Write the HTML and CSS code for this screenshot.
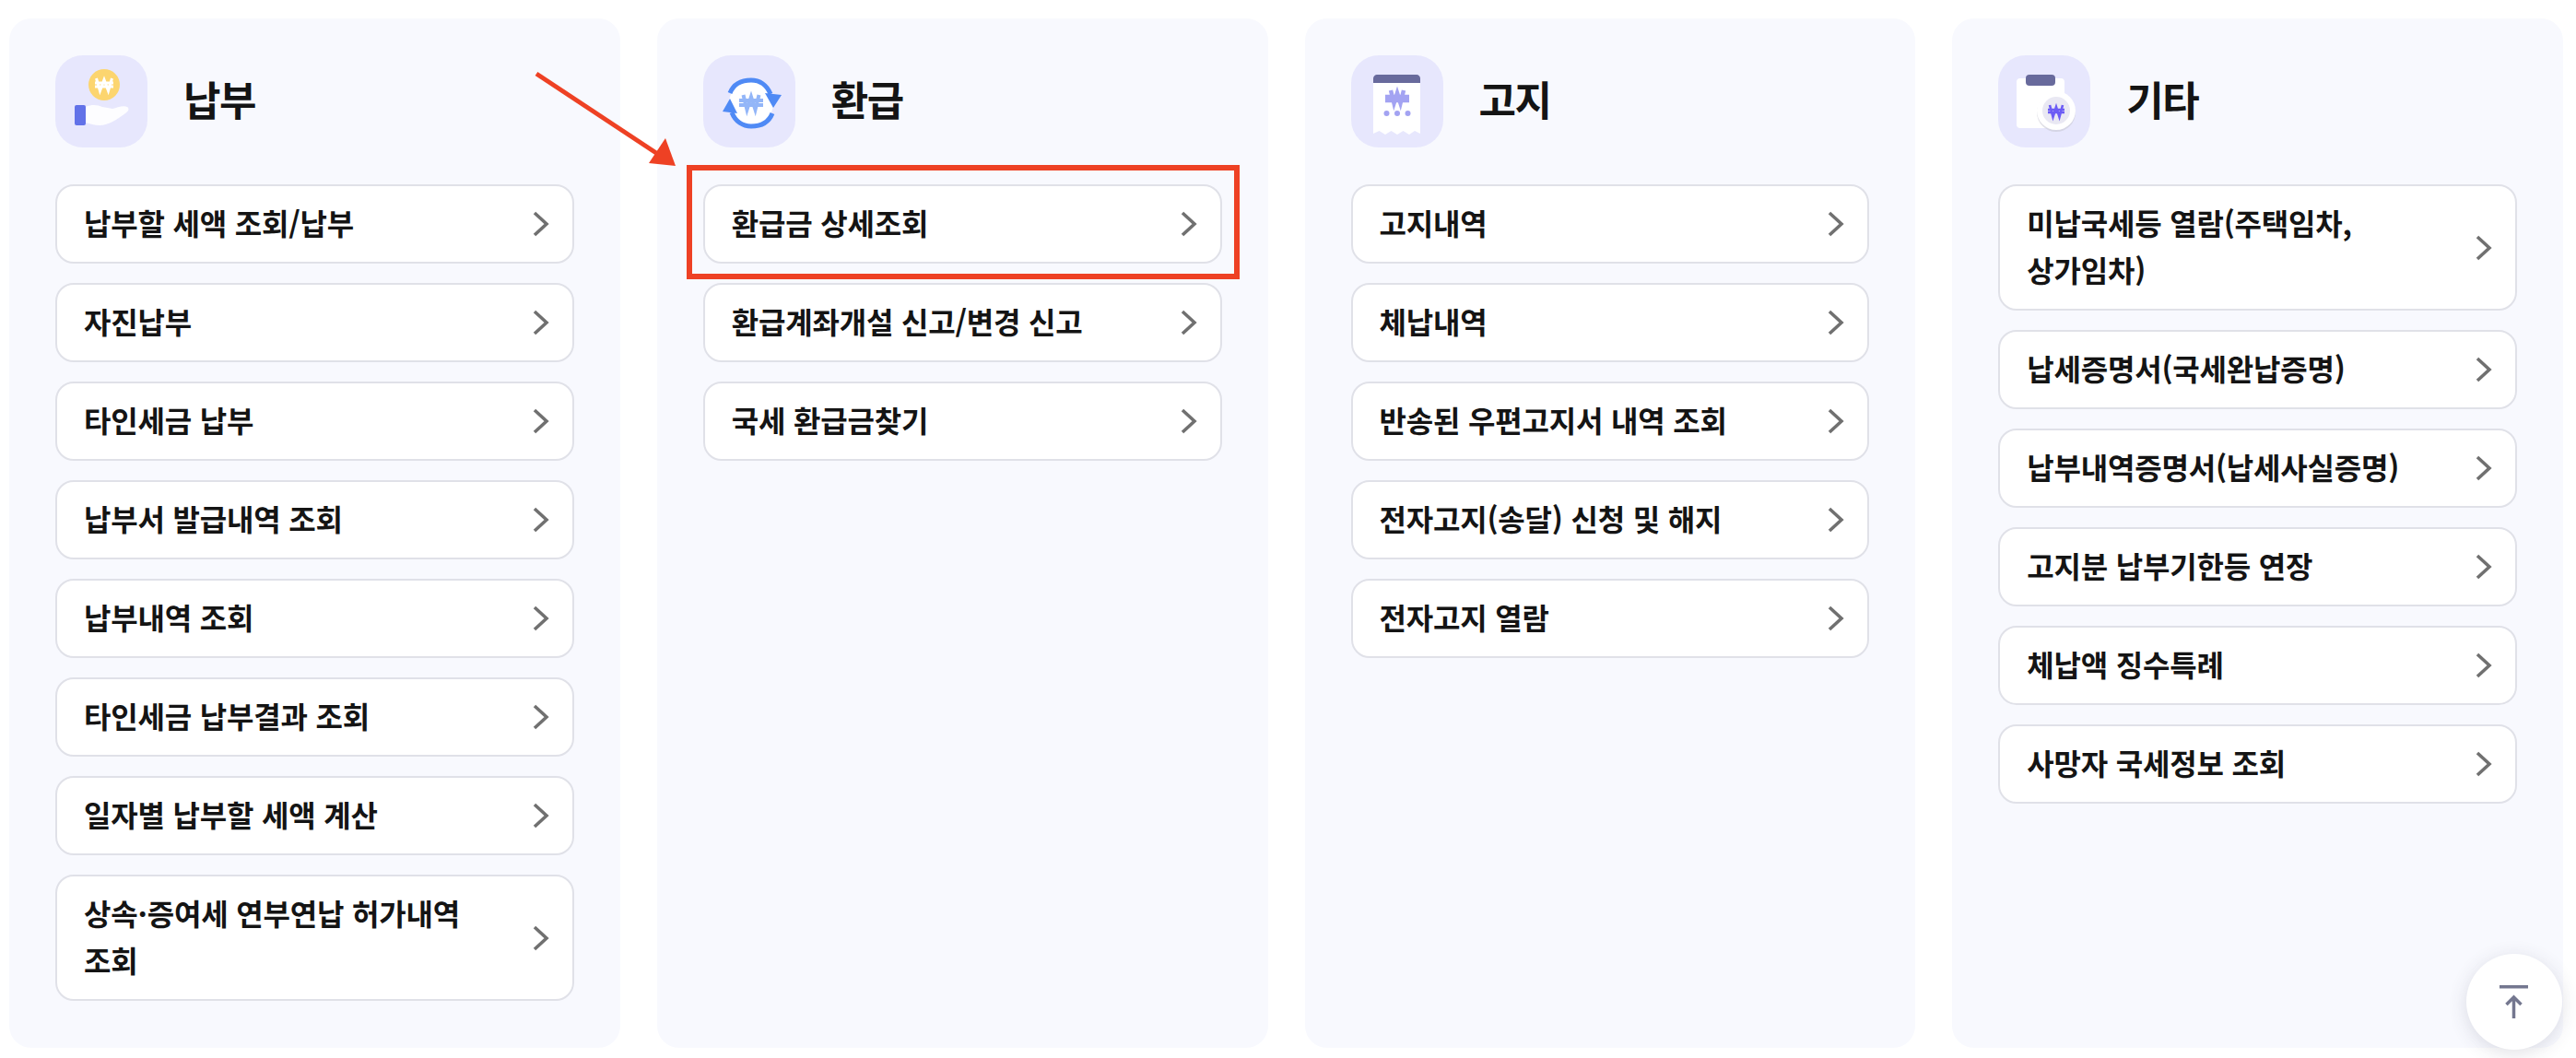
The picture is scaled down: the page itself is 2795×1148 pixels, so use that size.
FILE: index.html
```html
<!DOCTYPE html>
<html lang="ko">
<head>
    <meta charset="UTF-8">
    <meta name="viewport" content="width=device-width, initial-scale=1.0">
    <title>세금 납부 메뉴</title>
    <link rel="stylesheet" href="styles.css">
</head>
<body>
    <div class="menu-grid">
        <section class="menu-card">
            <div class="card-head">
                <div class="card-icon">
                    <svg viewBox="0 0 100 100">
                        <circle cx="53" cy="32" r="17" fill="#fcd56f"/>
                        <path d="M44.500 25l4 13.500 4.500-12 4.500 12 4-13.500M43 30h20M43 34h20" fill="none" stroke="#fff" stroke-width="3"/>
                        <path d="M33 56c7-3 13-2 18 0 4 1 8 1 11 2 5-1 11-4 16-2 3 2 1 5-2 7-8 6-18 13-28 13-6 0-10-2-15-3z" fill="#fff" opacity=".9"/>
                        <rect x="21" y="54" width="12" height="22" rx="2" fill="#6272e8"/>
                    </svg>
                </div>
                <h2>납부</h2>
            </div>
            <ul class="menu-list">
                <li><a href="#"><span>납부할 세액 조회/납부</span><svg class="chev" viewBox="0 0 18 28"><path d="M2 2l13 12L2 26"/></svg></a></li>
                <li><a href="#"><span>자진납부</span><svg class="chev" viewBox="0 0 18 28"><path d="M2 2l13 12L2 26"/></svg></a></li>
                <li><a href="#"><span>타인세금 납부</span><svg class="chev" viewBox="0 0 18 28"><path d="M2 2l13 12L2 26"/></svg></a></li>
                <li><a href="#"><span>납부서 발급내역 조회</span><svg class="chev" viewBox="0 0 18 28"><path d="M2 2l13 12L2 26"/></svg></a></li>
                <li><a href="#"><span>납부내역 조회</span><svg class="chev" viewBox="0 0 18 28"><path d="M2 2l13 12L2 26"/></svg></a></li>
                <li><a href="#"><span>타인세금 납부결과 조회</span><svg class="chev" viewBox="0 0 18 28"><path d="M2 2l13 12L2 26"/></svg></a></li>
                <li><a href="#"><span>일자별 납부할 세액 계산</span><svg class="chev" viewBox="0 0 18 28"><path d="M2 2l13 12L2 26"/></svg></a></li>
                <li><a href="#"><span>상속·증여세 연부연납 허가내역 조회</span><svg class="chev" viewBox="0 0 18 28"><path d="M2 2l13 12L2 26"/></svg></a></li>
            </ul>
        </section>

        <section class="menu-card">
            <div class="card-head">
                <div class="card-icon">
                    <svg viewBox="0 0 100 100">
                        <circle cx="52" cy="52" r="24" fill="#fff"/>
                        <path d="M29 41C33 31 42 27 52 27c9 0 17 5 21 15M75 63C71 73 62 77 52 77c-9 0-17-5-21-15" fill="none" stroke="#4f8af5" stroke-width="5"/>
                        <path d="M67 41l18 2-9 14zM37 63l-16-2 8-14z" fill="#4f8af5"/>
                        <path d="M43.500 43l4 16 4.500-14 4.500 14 4-16M39 49h26M39 54h26" fill="none" stroke="#93b6f8" stroke-width="4"/>
                    </svg>
                </div>
                <h2>환급</h2>
            </div>
            <ul class="menu-list">
                <li><a href="#"><span>환급금 상세조회</span><svg class="chev" viewBox="0 0 18 28"><path d="M2 2l13 12L2 26"/></svg></a></li>
                <li><a href="#"><span>환급계좌개설 신고/변경 신고</span><svg class="chev" viewBox="0 0 18 28"><path d="M2 2l13 12L2 26"/></svg></a></li>
                <li><a href="#"><span>국세 환급금찾기</span><svg class="chev" viewBox="0 0 18 28"><path d="M2 2l13 12L2 26"/></svg></a></li>
            </ul>
        </section>

        <section class="menu-card">
            <div class="card-head">
                <div class="card-icon">
                    <svg viewBox="0 0 100 100">
                        <path d="M24 28h51v57l-6-3-6 4-6.500-4-6.500 4-6.500-4-6.500 4-6.500-4-6.500 3z" fill="#fff"/>
                        <path d="M24 30v-5c0-2 2-4 4-4h43c2 0 4 2 4 4v5z" fill="#686a9c"/>
                        <path d="M43 38l3.500 14 3.500-11 3.500 11 3.500-14M37 45h26M37 49h26" fill="none" stroke="#a3a3f2" stroke-width="4.500"/>
                        <circle cx="38.500" cy="63" r="3" fill="#a3a3f2"/>
                        <circle cx="50" cy="63" r="3" fill="#a3a3f2"/>
                        <circle cx="61.500" cy="63" r="3" fill="#a3a3f2"/>
                    </svg>
                </div>
                <h2>고지</h2>
            </div>
            <ul class="menu-list">
                <li><a href="#"><span>고지내역</span><svg class="chev" viewBox="0 0 18 28"><path d="M2 2l13 12L2 26"/></svg></a></li>
                <li><a href="#"><span>체납내역</span><svg class="chev" viewBox="0 0 18 28"><path d="M2 2l13 12L2 26"/></svg></a></li>
                <li><a href="#"><span>반송된 우편고지서 내역 조회</span><svg class="chev" viewBox="0 0 18 28"><path d="M2 2l13 12L2 26"/></svg></a></li>
                <li><a href="#"><span>전자고지(송달) 신청 및 해지</span><svg class="chev" viewBox="0 0 18 28"><path d="M2 2l13 12L2 26"/></svg></a></li>
                <li><a href="#"><span>전자고지 열람</span><svg class="chev" viewBox="0 0 18 28"><path d="M2 2l13 12L2 26"/></svg></a></li>
            </ul>
        </section>

        <section class="menu-card">
            <div class="card-head">
                <div class="card-icon">
                    <svg viewBox="0 0 100 100">
                        <rect x="20" y="25" width="52" height="54" rx="4" fill="#fff"/>
                        <rect x="30" y="21" width="32" height="12" rx="4" fill="#686a9c"/>
                        <circle cx="63" cy="62" r="21" fill="#c9c9d6" opacity=".6"/>
                        <circle cx="63" cy="60" r="21" fill="#fff"/>
                        <circle cx="63" cy="60" r="15" fill="#e9e8f3"/>
                        <path d="M56 54l3.500 13 3.500-11 3.500 11 3.500-13M54 59h18M54 62h18" fill="none" stroke="#6c5cf5" stroke-width="2.600"/>
                    </svg>
                </div>
                <h2>기타</h2>
            </div>
            <ul class="menu-list">
                <li><a href="#"><span>미납국세등 열람(주택임차, 상가임차)</span><svg class="chev" viewBox="0 0 18 28"><path d="M2 2l13 12L2 26"/></svg></a></li>
                <li><a href="#"><span>납세증명서(국세완납증명)</span><svg class="chev" viewBox="0 0 18 28"><path d="M2 2l13 12L2 26"/></svg></a></li>
                <li><a href="#"><span>납부내역증명서(납세사실증명)</span><svg class="chev" viewBox="0 0 18 28"><path d="M2 2l13 12L2 26"/></svg></a></li>
                <li><a href="#"><span>고지분 납부기한등 연장</span><svg class="chev" viewBox="0 0 18 28"><path d="M2 2l13 12L2 26"/></svg></a></li>
                <li><a href="#"><span>체납액 징수특례</span><svg class="chev" viewBox="0 0 18 28"><path d="M2 2l13 12L2 26"/></svg></a></li>
                <li><a href="#"><span>사망자 국세정보 조회</span><svg class="chev" viewBox="0 0 18 28"><path d="M2 2l13 12L2 26"/></svg></a></li>
            </ul>
        </section>
    </div>

    <!-- annotation drawn over the page -->
    <svg class="annotation" viewBox="0 0 2795 1148">
        <path d="M582 80L712 166" fill="none" stroke="#ee4124" stroke-width="5"/>
        <path d="M733 180L704 177L722 150z" fill="#ee4124"/>
        <rect x="748" y="182" width="594" height="118" fill="none" stroke="#ee4124" stroke-width="6"/>
    </svg>

    <button class="to-top" type="button" aria-label="맨 위로">
        <svg viewBox="0 0 32 36"><path d="M0 1.700h31M15.500 36V13M7.500 21l8-8 8 8"/></svg>
    </button>
</body>
</html>
```

FILE: styles.css
```css
* {
    box-sizing: border-box;
}
html, body {
    height: 100%;
}
body {
    margin: 0;
    padding: 20px 14px 11px 10px;
    background-color: #fff;
    color: #141414;
    font-family: "Noto Sans CJK KR", "Noto Sans", sans-serif;
    overflow: hidden;
}
.menu-grid {
    display: grid;
    grid-template-columns: repeat(4, 1fr);
    gap: 40px;
    height: 100%;
}
.menu-card {
    background-color: #f8f9fe;
    border-radius: 24px;
    padding: 40px 50px;
}
.card-head {
    display: flex;
    align-items: center;
    gap: 39px;
    margin-bottom: 40px;
}
.card-icon {
    width: 100px;
    height: 100px;
    border-radius: 30px;
    background-color: #e7e7fd;
}
.card-icon svg {
    display: block;
    width: 100%;
    height: 100%;
}
.card-head h2 {
    margin: 0 0 6px;
    font-size: 44px;
    font-weight: 700;
    letter-spacing: -1.500px;
    line-height: 56px;
}
.menu-list {
    list-style: none;
    margin: 0;
    padding: 0;
    display: flex;
    flex-direction: column;
    gap: 21px;
}
.menu-list a {
    display: flex;
    align-items: center;
    justify-content: space-between;
    padding: 15.500px 25px 15.500px 29px;
    background-color: #fff;
    border: 2px solid #e0e1e8;
    border-radius: 20px;
    color: inherit;
    text-decoration: none;
    font-size: 32px;
    font-weight: 600;
    letter-spacing: -0.2px;
    line-height: 51px;
    word-break: keep-all;
}
.menu-list span {
    max-width: 430px;
    position: relative;
    top: -2px;
}
.chev {
    flex: none;
    width: 18px;
    height: 28px;
    fill: none;
    stroke: #707070;
    stroke-width: 3.600;
}
.annotation {
    position: absolute;
    top: 0;
    left: 0;
    width: 2795px;
    height: 1148px;
    pointer-events: none;
}
.to-top {
    position: absolute;
    top: 1035px;
    left: 2676px;
    width: 104px;
    height: 104px;
    padding: 0;
    border: none;
    border-radius: 50%;
    background-color: #fff;
    box-shadow: 0 4px 20px rgba(60, 60, 90, 0.16);
    display: flex;
    align-items: center;
    justify-content: center;
}
.to-top svg {
    width: 32px;
    height: 36px;
    fill: none;
    stroke: #74778f;
    stroke-width: 3.500;
}
```
